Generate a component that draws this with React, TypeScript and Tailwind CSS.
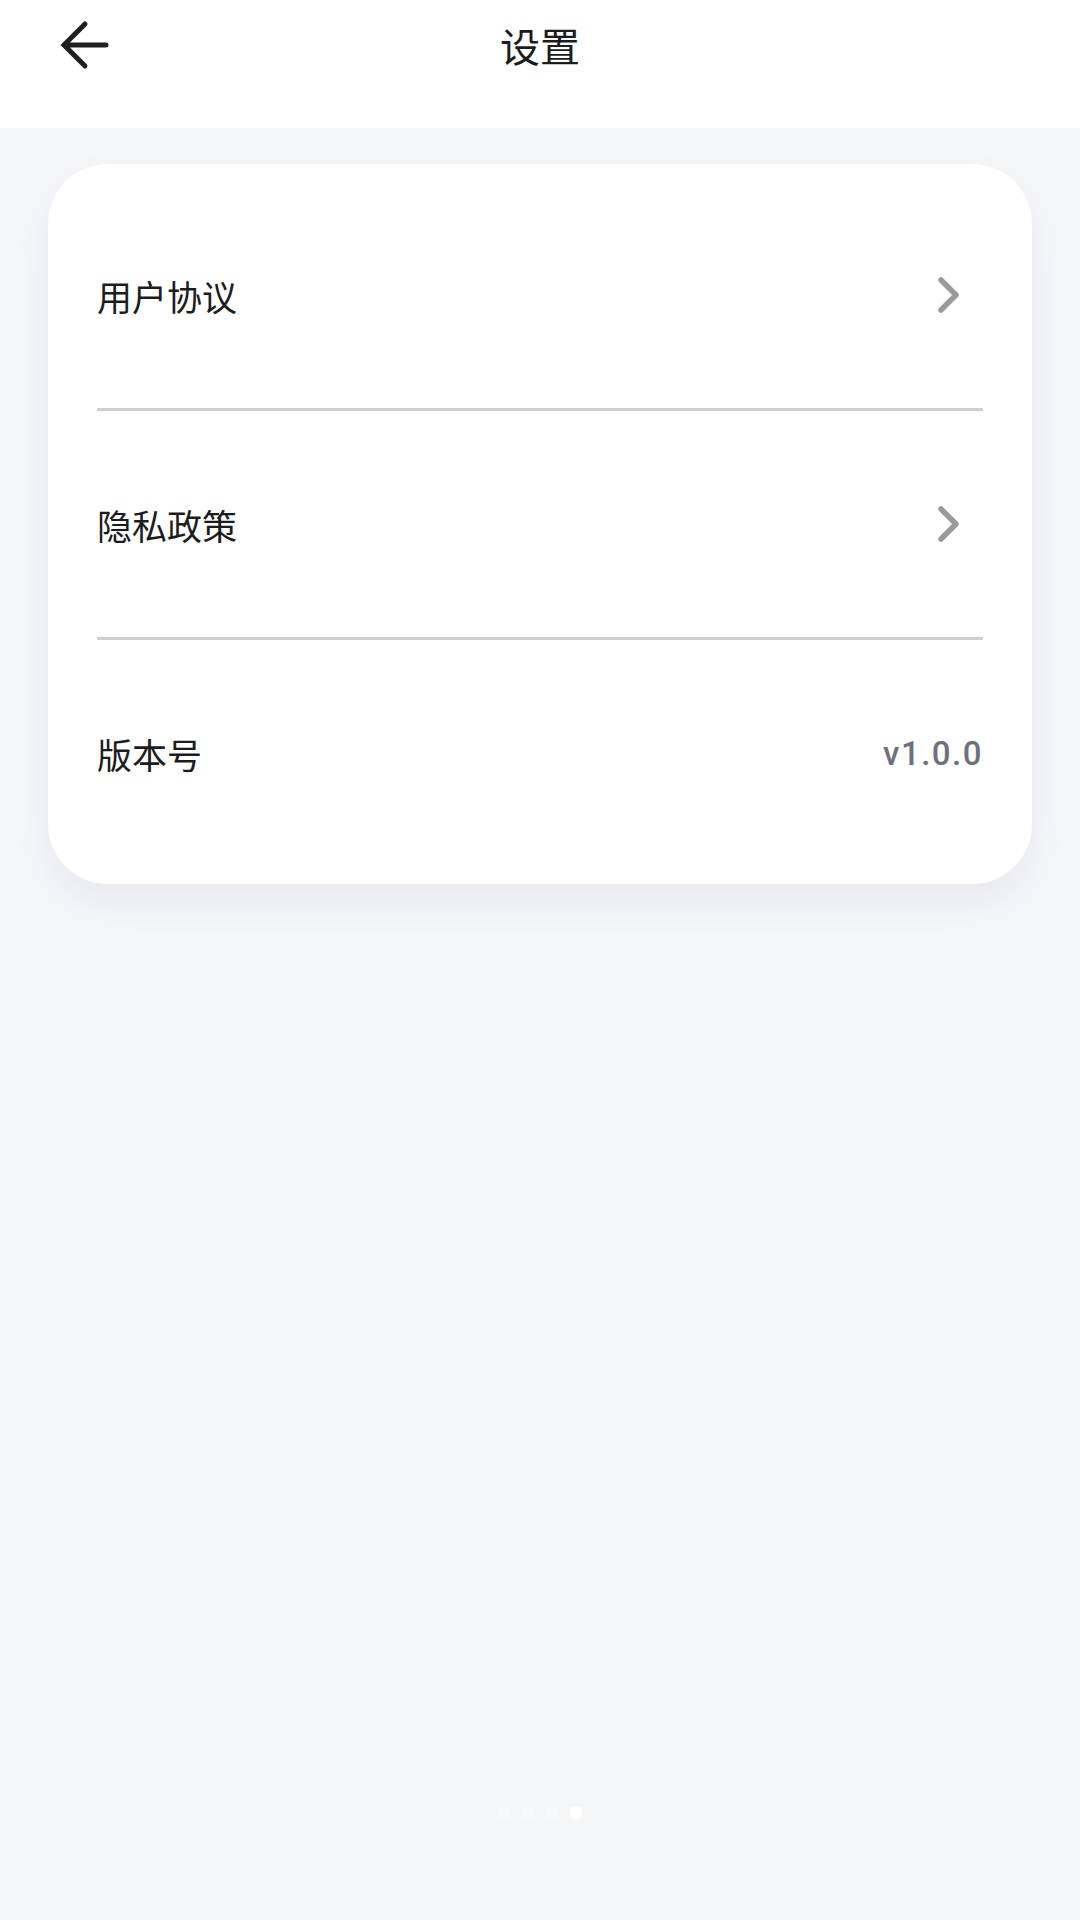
import React from "react";

function Chevron() {
  return (
    <svg width="28" height="40" viewBox="0 0 28 40" className="mr-[20px]">
      <path d="M6 5 L21 20 L6 35" fill="none" stroke="#9b9b9e" strokeWidth="5.5" strokeLinecap="round" strokeLinejoin="round" />
    </svg>
  );
}

function Row({ label, right }: { label: string; right: React.ReactNode }) {
  return (
    <div className="flex h-[226px] items-center justify-between px-[49px]">
      <span className="text-[35px] leading-none text-[#1c1c1e]">{label}</span>
      {right}
    </div>
  );
}

function Divider() {
  return <div className="mx-[49px] h-[3px] bg-[#cfcfd3]" />;
}

export default function App() {
  return (
    <div
      className="flex h-[1920px] w-[1080px] flex-col bg-[#f5f6fa]"
      style={{ fontFamily: '"Noto Sans CJK SC", "Noto Sans", sans-serif' }}
    >
      <header className="h-[128px] bg-white">
        <div className="grid h-[90px] grid-cols-[1fr_auto_1fr] items-center">
          <div className="flex items-center pl-[56px]">
            <svg width="56" height="56" viewBox="0 0 56 56">
              <path d="M50 28 H8 M29 7 L8 28 L29 49" fill="none" stroke="#1f1f21" strokeWidth="5" strokeLinecap="round" strokeLinejoin="miter" />
            </svg>
          </div>
          <h1 className="text-[40px] font-normal leading-none text-[#1c1c1e]">设置</h1>
          <div />
        </div>
      </header>

      <main className="flex flex-1 flex-col px-[48px] pt-[36px]">
        <div className="rounded-[60px] bg-white py-[18px] shadow-[0_18px_40px_rgba(30,40,80,0.06)]">
          <Row label="用户协议" right={<Chevron />} />
          <Divider />
          <Row label="隐私政策" right={<Chevron />} />
          <Divider />
          <Row
            label="版本号"
            right={
              <span
                className="text-[33px] font-medium leading-none tracking-[1.5px] text-[#6e717d]"
                style={{ fontFamily: 'Roboto, "Noto Sans", sans-serif' }}
              >
                v1.0.0
              </span>
            }
          />
        </div>
      </main>

      <div className="flex items-center justify-center gap-[12px] pb-[100px]">
        <span className="h-[13px] w-[12px] rounded-b-[6px] rounded-t-[3px] bg-[#f7f8fb]" />
        <span className="h-[13px] w-[12px] rounded-b-[6px] rounded-t-[3px] bg-[#f7f8fb]" />
        <span className="h-[13px] w-[12px] rounded-b-[6px] rounded-t-[3px] bg-[#f7f8fb]" />
        <span className="h-[13px] w-[12px] rounded-b-[6px] rounded-t-[3px] bg-white" />
      </div>
    </div>
  );
}
